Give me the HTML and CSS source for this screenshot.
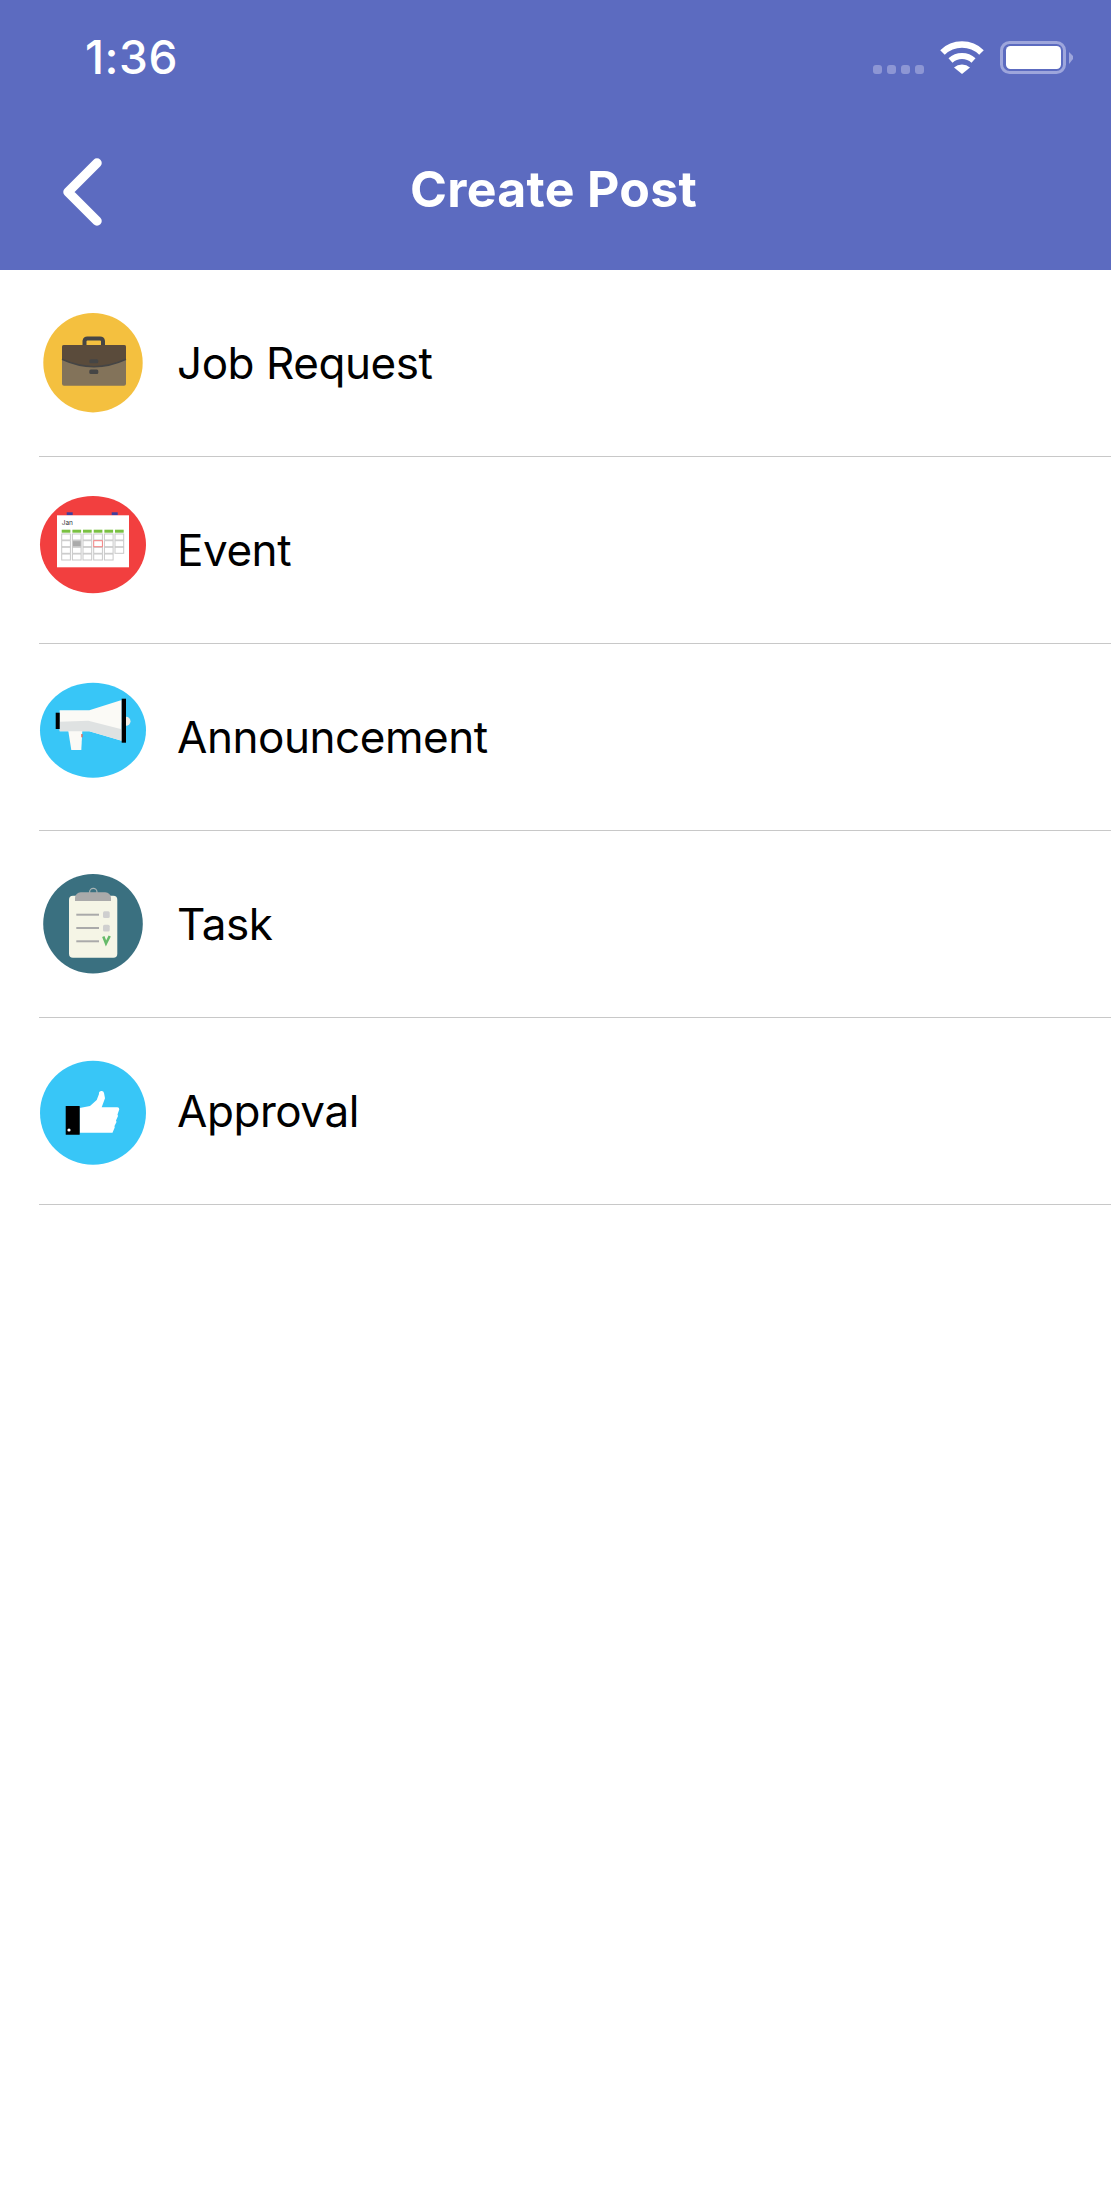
FILE: index.html
```html
<!DOCTYPE html>
<html>

<head>
    <title>Create Post</title>
    <link rel="stylesheet" href="styles.css">
</head>

<body>
    <header class="header">
        <div class="status-bar">
            <span class="time">1:36</span>
            <div class="status-icons">
                <div class="signal">
                    <span class="signal-dot"></span>
                    <span class="signal-dot"></span>
                    <span class="signal-dot"></span>
                    <span class="signal-dot"></span>
                </div>
                <svg class="wifi" width="46" height="33" viewBox="0 0 46 33">
                    <path d="M3.500 11.500A28 28 0 0 1 42.500 11.500" fill="none" stroke="#fff" stroke-width="6.500" />
                    <path d="M11.500 19.500A17 17 0 0 1 34.500 19.500" fill="none" stroke="#fff" stroke-width="6" />
                    <path d="M23 33L15 26.500A12 12 0 0 1 31 26.500Z" fill="#fff" />
                </svg>
                <svg class="battery" width="73" height="33" viewBox="0 0 73 33">
                    <rect x="1.500" y="1.500" width="63" height="30" rx="8" fill="none" stroke="#9ea6dc" stroke-width="3" />
                    <rect x="6" y="5" width="55" height="23" rx="4.500" fill="#fff" />
                    <path d="M69 11L73 15V18L69 23Z" fill="#9ea6dc" />
                </svg>
            </div>
        </div>
        <nav class="nav">
            <svg class="back" width="40" height="68" viewBox="0 0 40 68">
                <path d="M34 5L5 34L34 63" fill="none" stroke="#fff" stroke-width="9.500" stroke-linecap="round" stroke-linejoin="round" />
            </svg>
            <h1 class="title">Create Post</h1>
        </nav>
    </header>

    <ul class="post-list">
        <li class="post-row">
            <svg class="post-icon" viewBox="0 0 106 106">
                <circle cx="53" cy="52.700" r="49.700" fill="#f4c03f" />
                <path d="M44.500 35V31A3 3 0 0 1 47.500 28.500H60A3 3 0 0 1 63 31V35" fill="none" stroke="#454545" stroke-width="4" />
                <path d="M24 35H84A2 2 0 0 1 86 37V73.700A2 2 0 0 1 84 75.700H24A2 2 0 0 1 22 73.700V37A2 2 0 0 1 24 35Z" fill="#83735a" />
                <path d="M24 35H84A2 2 0 0 1 86 37V49.300Q54 64 22 49.300V37A2 2 0 0 1 24 35Z" fill="#5a4b3b" />
                <path d="M22 49.300Q54 64 86 49.300" fill="none" stroke="#454545" stroke-width="1.500" />
                <rect x="49.300" y="49.300" width="9" height="4" rx="1.500" fill="#454545" />
                <rect x="49.300" y="59.500" width="9" height="4.500" rx="1.500" fill="#454545" />
            </svg>
            <span class="post-label">Job Request</span>
        </li>
        <li class="post-row">
            <svg class="post-icon" viewBox="0 0 106 106">
                <ellipse cx="53" cy="47.600" rx="53" ry="48.700" fill="#f23f3f" />
                <rect x="26.700" y="15.300" width="6" height="3" fill="#3f3f9e" />
                <rect x="71.700" y="15.300" width="6" height="3" fill="#3f3f9e" />
                <rect x="17" y="18.300" width="72" height="52" fill="#fff" />
                <text class="calendar-month" x="21.700" y="27.500">Jan</text>
                <g fill="#7ac143">
                    <rect x="21.700" y="32.700" width="8.700" height="3" />
                    <rect x="32.400" y="32.700" width="8.700" height="3" />
                    <rect x="43" y="32.700" width="8.700" height="3" />
                    <rect x="53.700" y="32.700" width="8.700" height="3" />
                    <rect x="64.400" y="32.700" width="8.700" height="3" />
                    <rect x="75" y="32.700" width="8.700" height="3" />
                </g>
                <g fill="#fff" stroke="#c8c8c8" stroke-width="1">
                    <rect x="21.700" y="37" width="8.700" height="6" />
                    <rect x="32.400" y="37" width="8.700" height="6" />
                    <rect x="43" y="37" width="8.700" height="6" />
                    <rect x="53.700" y="37" width="8.700" height="6" />
                    <rect x="64.400" y="37" width="8.700" height="6" />
                    <rect x="75" y="37" width="8.700" height="6" />
                    <rect x="21.700" y="43.700" width="8.700" height="6" />
                    <rect x="32.400" y="43.700" width="8.700" height="6" fill="#aaa" />
                    <rect x="43" y="43.700" width="8.700" height="6" />
                    <rect x="64.400" y="43.700" width="8.700" height="6" />
                    <rect x="75" y="43.700" width="8.700" height="6" />
                    <rect x="21.700" y="50.300" width="8.700" height="6" />
                    <rect x="32.400" y="50.300" width="8.700" height="6" />
                    <rect x="43" y="50.300" width="8.700" height="6" />
                    <rect x="53.700" y="50.300" width="8.700" height="6" />
                    <rect x="64.400" y="50.300" width="8.700" height="6" />
                    <rect x="75" y="50.300" width="8.700" height="6" />
                    <rect x="21.700" y="57" width="8.700" height="6" />
                    <rect x="32.400" y="57" width="8.700" height="6" />
                    <rect x="43" y="57" width="8.700" height="6" />
                    <rect x="53.700" y="57" width="8.700" height="6" />
                    <rect x="64.400" y="57" width="8.700" height="6" />
                    <rect x="53.700" y="43.700" width="8.700" height="6" stroke="#f08080" />
                </g>
            </svg>
            <span class="post-label">Event</span>
        </li>
        <li class="post-row">
            <svg class="post-icon" viewBox="0 0 106 106">
                <ellipse cx="53" cy="46.200" rx="53" ry="47.500" fill="#38c6f7" />
                <circle cx="86" cy="37.200" r="4.500" fill="#f0ece4" />
                <path d="M28.300 47L42.300 47L41.300 66H31.300Z" fill="#fbfaf6" />
                <rect x="41.300" y="50" width="1.300" height="3.300" fill="#e8604c" />
                <path d="M19.700 26.300H49.300L81.700 16V56.700L49.300 47.300H19.700Z" fill="#fbfaf6" />
                <path d="M19.700 37.700L48.300 36.700L81.700 45.300V56.700L49.300 47.300H19.700Z" fill="#dfe2e2" />
                <rect x="15.700" y="28.700" width="4" height="16.300" fill="#000" />
                <rect x="81.700" y="14.700" width="4.300" height="44" fill="#000" />
            </svg>
            <span class="post-label">Announcement</span>
        </li>
        <li class="post-row">
            <svg class="post-icon" viewBox="0 0 106 106">
                <circle cx="53" cy="52.800" r="49.800" fill="#3a7080" />
                <circle cx="53.300" cy="21" r="3.700" fill="none" stroke="#a8b4b4" stroke-width="1.200" />
                <rect x="29" y="24.700" width="48.300" height="62" rx="4" fill="#f5f5e6" />
                <path d="M35 30V27A5.700 5.700 0 0 1 40.700 21.300H65.300A5.700 5.700 0 0 1 71 27V30Z" fill="#aaa" />
                <g stroke="#aaa" stroke-width="2">
                    <path d="M36.300 43.700H59" />
                    <path d="M36.300 57H59" />
                    <path d="M36.300 70.300H59" />
                </g>
                <rect x="63" y="40.300" width="6.700" height="6.700" rx="1.500" fill="#cfcfcf" />
                <rect x="63" y="53.700" width="6.700" height="6.700" rx="1.500" fill="#cfcfcf" />
                <path d="M63.300 65.500L66 72.500L69.700 65" fill="none" stroke="#66bb6a" stroke-width="2.500" />
            </svg>
            <span class="post-label">Task</span>
        </li>
        <li class="post-row">
            <svg class="post-icon" viewBox="0 0 106 106">
                <ellipse cx="53" cy="54.800" rx="53" ry="52" fill="#38c6f7" />
                <path d="M39.700 50L50 48L56.700 42L59 36A2.500 2.500 0 0 1 64 35L65 40.300L61.700 49.300H77.300A2 2 0 0 1 79.300 51.300L77.500 56.500L78 58L76 62.500L76.500 64L74.500 68L74.700 69.500L72.500 74.700H39.700Z" fill="#fff" />
                <rect x="25.700" y="48" width="14" height="28.700" rx="0.500" fill="#000" />
                <circle cx="29" cy="72" r="1.600" fill="#fff" />
            </svg>
            <span class="post-label">Approval</span>
        </li>
    </ul>
</body>

</html>
```
FILE: styles.css
```css
body {
    margin: 0;
    background-color: #fff;
    font-family: Inter, "Liberation Sans", sans-serif;
}

.header {
    height: 270px;
    background-color: #5c6bc0;
    color: #fff;
}

.status-bar {
    height: 114px;
    display: flex;
    justify-content: space-between;
    align-items: center;
    padding: 0 38px 0 85px;
}

.time {
    font-size: 46px;
    font-weight: 500;
    letter-spacing: 0.5px;
}

.status-icons {
    display: flex;
    align-items: flex-start;
}

.signal {
    display: flex;
    gap: 5.3px;
    margin-top: 24px;
    margin-right: 15px;
}

.signal-dot {
    width: 8.7px;
    height: 9px;
    border-radius: 3px;
    background-color: #8d96d4;
}

.battery {
    margin-left: 15px;
}

.nav {
    height: 156px;
    display: grid;
    grid-template-columns: 1fr auto 1fr;
    align-items: center;
    padding-left: 63px;
    padding-right: 67px;
}

.title {
    margin: 0 0 7px;
    font-size: 50px;
    font-weight: 700;
    letter-spacing: 0.3px;
}

.post-list {
    margin: 0;
    padding: 0 0 0 39px;
    list-style: none;
}

.post-row {
    height: 187px;
    box-sizing: border-box;
    display: flex;
    align-items: center;
    gap: 31px;
    padding-left: 1px;
    border-bottom: 1px solid #c8c8c8;
}

.post-icon {
    width: 106px;
    height: 106px;
    flex: none;
    overflow: visible;
}

.calendar-month {
    font-size: 6.500px;
    fill: #333;
}

.post-label {
    font-size: 44px;
    letter-spacing: -0.45px;
    color: #000;
}
```
